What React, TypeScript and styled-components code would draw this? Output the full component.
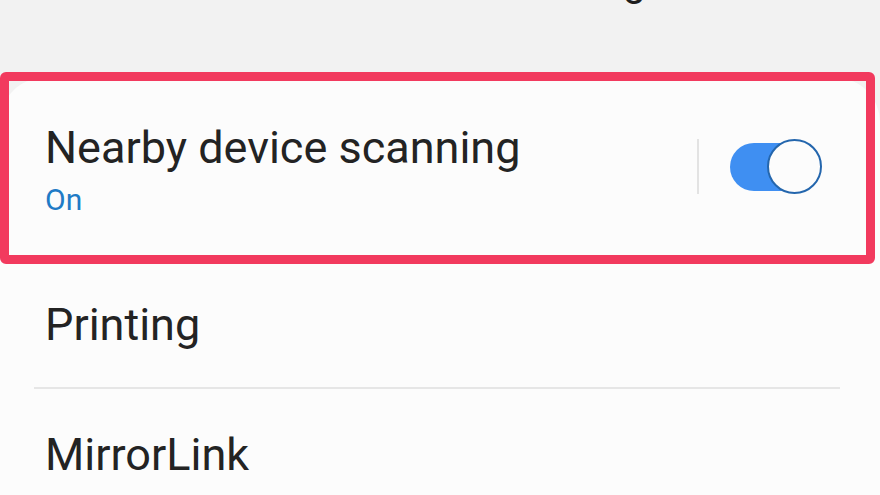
import React from "react";
import styled, { createGlobalStyle } from "styled-components";

const Global = createGlobalStyle`
  html, body { margin: 0; padding: 0; background: #f2f2f2; overflow: hidden; }
  body { font-family: Roboto, "Noto Sans", "Liberation Sans", sans-serif; }
  * { box-sizing: border-box; }
`;

const Screen = styled.div`
  width: 880px;
  height: 495px;
  overflow: hidden;
  background: #f2f2f2;
  display: flex;
  flex-direction: column;
`;

const Header = styled.header`
  height: 78px;
  flex: none;
  display: flex;
  justify-content: center;
  align-items: flex-start;
`;

const Title = styled.h1`
  margin: -41px 0 0 0;
  font-size: 40px;
  line-height: 48px;
  font-weight: 400;
  color: #1e1e1e;
`;

const Card = styled.section`
  flex: 1;
  background: #fcfcfc;
  border-radius: 44px 44px 0 0;
  display: flex;
  flex-direction: column;
`;

const Row = styled.div<{ $h: number }>`
  position: relative;
  height: ${(p) => p.$h}px;
  flex: none;
  display: flex;
  align-items: center;
  padding: 0 58px 0 45px;
`;

const TopRow = styled.div`
  flex: none;
  display: flex;
  flex-direction: column;
  padding: 40px 45px 0 45px;
`;

const TextBlock = styled.div`
  flex: 1;
  display: flex;
  flex-direction: column;
  gap: 8px;
`;

const Label = styled.div`
  font-size: 45px;
  line-height: 52px;
  color: #232323;
  white-space: nowrap;
`;

const Status = styled.div`
  font-size: 30px;
  line-height: 36px;
  color: #1f7bc6;
`;

const Sub = styled.div`
  margin-top: 10px;
  font-size: 30px;
  line-height: 36px;
  color: #7a7a7a;
  white-space: nowrap;
`;

const Controls = styled.div`
  display: flex;
  align-items: center;
  gap: 31px;
  margin-bottom: 7px;
`;

const VRule = styled.div`
  width: 2px;
  height: 55px;
  background: #e3e3e3;
`;

const Switch = styled.div`
  position: relative;
  width: 92px;
  height: 55px;
`;

const Track = styled.div`
  position: absolute;
  left: 0;
  top: 3.5px;
  width: 74px;
  height: 48px;
  border-radius: 24px;
  background: #3f8ff2;
`;

const Knob = styled.div`
  position: absolute;
  right: 0;
  top: 0;
  width: 55px;
  height: 55px;
  border-radius: 50%;
  background: #fcfcfc;
  border: 2.5px solid #2466ad;
`;

const Highlight = styled.div`
  position: absolute;
  left: 0;
  right: 5px;
  top: -6px;
  bottom: -2px;
  border: 9px solid #f23a5e;
  border-radius: 6px;
  pointer-events: none;
`;

const Divider = styled.hr`
  margin: 0 40px 0 34px;
  border: none;
  height: 2px;
  background: #e6e6e6;
  flex: none;
`;

export default function App() {
  return (
    <>
      <Global />
      <Screen>
        <Header>
          <Title>More connection settings</Title>
        </Header>
        <Card>
          <Row $h={184}>
            <TextBlock>
              <Label>Nearby device scanning</Label>
              <Status>On</Status>
            </TextBlock>
            <Controls>
              <VRule />
              <Switch>
                <Track />
                <Knob />
              </Switch>
            </Controls>
            <Highlight />
          </Row>
          <Row $h={125}>
            <Label>Printing</Label>
          </Row>
          <Divider />
          <TopRow>
            <Label>MirrorLink</Label>
            <Sub>Connect your phone to your car to use its apps and features.</Sub>
          </TopRow>
        </Card>
      </Screen>
    </>
  );
}
